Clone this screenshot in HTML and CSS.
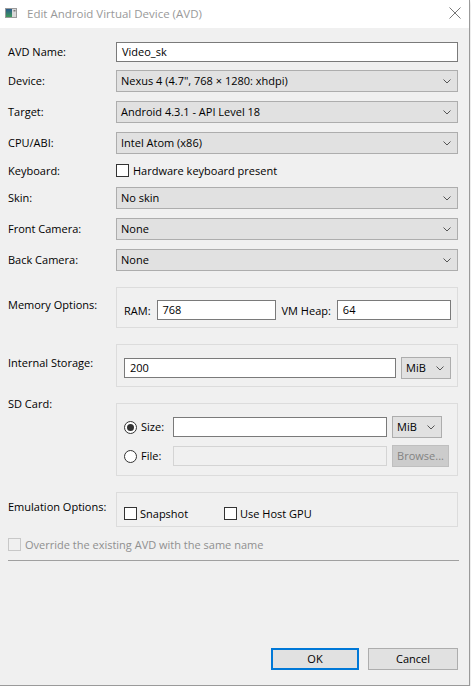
FILE: index.html
```html
<!DOCTYPE html>
<html>
<head>
<meta charset="utf-8">
<link rel="stylesheet" href="styles.css">
</head>
<body>
<div class="window">
  <div class="titlebar">
    <svg class="appicon" width="12" height="10" viewBox="0 0 12 10">
      <defs>
        <linearGradient id="g" x1="0" y1="0" x2="0" y2="1">
          <stop offset="0" stop-color="#2a5a8c"/>
          <stop offset="1" stop-color="#3f9a5a"/>
        </linearGradient>
      </defs>
      <rect x="0.5" y="0.5" width="11" height="9" fill="#d8d8d8" stroke="#9a9a9a"/>
      <rect x="1" y="1" width="6" height="8" fill="url(#g)"/>
      <rect x="8.5" y="2" width="2" height="1.5" fill="#7a7a7a"/>
    </svg>
    <span class="title">Edit Android Virtual Device (AVD)</span>
    <svg class="close" width="12" height="12" viewBox="0 0 12 12">
      <path d="M0.5 0.5 L11.5 11.5 M11.5 0.5 L0.5 11.5" stroke="#777" stroke-width="1" fill="none"/>
    </svg>
  </div>

  <div class="content">
    <div class="row r-name">
      <div class="lbl">AVD Name:</div>
      <div class="input wide">Video_sk</div>
    </div>
    <div class="row r-first">
      <div class="lbl">Device:</div>
      <div class="combo wide"><span>Nexus 4 (4.7", 768 × 1280: xhdpi)</span><svg class="chev" width="8" height="5" viewBox="0 0 8 5"><polyline points="0.5,0.5 4,4 7.5,0.5" fill="none" stroke="#555"/></svg></div>
    </div>
    <div class="row r-combo">
      <div class="lbl">Target:</div>
      <div class="combo wide"><span>Android 4.3.1 - API Level 18</span><svg class="chev" width="8" height="5" viewBox="0 0 8 5"><polyline points="0.5,0.5 4,4 7.5,0.5" fill="none" stroke="#555"/></svg></div>
    </div>
    <div class="row r-combo">
      <div class="lbl">CPU/ABI:</div>
      <div class="combo wide"><span>Intel Atom (x86)</span><svg class="chev" width="8" height="5" viewBox="0 0 8 5"><polyline points="0.5,0.5 4,4 7.5,0.5" fill="none" stroke="#555"/></svg></div>
    </div>
    <div class="row r-check">
      <div class="lbl">Keyboard:</div>
      <div class="checkitem"><span class="check"></span><span>Hardware keyboard present</span></div>
    </div>
    <div class="row r-after-check">
      <div class="lbl">Skin:</div>
      <div class="combo wide"><span>No skin</span><svg class="chev" width="8" height="5" viewBox="0 0 8 5"><polyline points="0.5,0.5 4,4 7.5,0.5" fill="none" stroke="#555"/></svg></div>
    </div>
    <div class="row r-combo">
      <div class="lbl">Front Camera:</div>
      <div class="combo wide"><span>None</span><svg class="chev" width="8" height="5" viewBox="0 0 8 5"><polyline points="0.5,0.5 4,4 7.5,0.5" fill="none" stroke="#555"/></svg></div>
    </div>
    <div class="row r-combo">
      <div class="lbl">Back Camera:</div>
      <div class="combo wide"><span>None</span><svg class="chev" width="8" height="5" viewBox="0 0 8 5"><polyline points="0.5,0.5 4,4 7.5,0.5" fill="none" stroke="#555"/></svg></div>
    </div>

    <div class="grow g-mem">
      <div class="glbl">Memory Options:</div>
      <div class="group mem">
        <span>RAM:</span>
        <div class="input">768</div>
        <span>VM Heap:</span>
        <div class="input">64</div>
      </div>
    </div>

    <div class="grow g-int">
      <div class="glbl">Internal Storage:</div>
      <div class="group int">
        <div class="input">200</div>
        <div class="combo"><span>MiB</span><svg class="chev" width="8" height="5" viewBox="0 0 8 5"><polyline points="0.5,0.5 4,4 7.5,0.5" fill="none" stroke="#555"/></svg></div>
      </div>
    </div>

    <div class="grow g-sd">
      <div class="glbl">SD Card:</div>
      <div class="group sd">
        <div class="radioitem"><span class="radio on"></span><span>Size:</span></div>
        <div class="input"></div>
        <div class="combo"><span>MiB</span><svg class="chev" width="8" height="5" viewBox="0 0 8 5"><polyline points="0.5,0.5 4,4 7.5,0.5" fill="none" stroke="#555"/></svg></div>
        <div class="radioitem"><span class="radio"></span><span>File:</span></div>
        <div class="input disabled"></div>
        <div class="btn disabled">Browse...</div>
      </div>
    </div>

    <div class="grow g-emu">
      <div class="glbl">Emulation Options:</div>
      <div class="group emu">
        <div class="checkitem first"><span class="check"></span><span>Snapshot</span></div>
        <div class="checkitem"><span class="check"></span><span>Use Host GPU</span></div>
      </div>
    </div>

    <div class="override checkitem disabled"><span class="check"></span><span>Override the existing AVD with the same name</span></div>
    <div class="separator"></div>
  </div>

  <div class="footer">
    <div class="btn ok">OK</div>
    <div class="btn cancel">Cancel</div>
  </div>
</div>
</body>
</html>
```

FILE: styles.css
```css
html, body {
  margin: 0;
  padding: 0;
  background: #ffffff;
}

body {
  font-family: "Open Sans", "Noto Sans", sans-serif;
  font-size: 11px;
  color: #000;
}

.window {
  width: 469px;
  height: 685px;
  background: #f0f0f0;
  border-right: 1px solid #9a9a9a;
  border-bottom: 1px solid #9a9a9a;
  box-shadow: 0 2px 4px rgba(0, 0, 0, 0.18);
  display: flex;
  flex-direction: column;
}

.titlebar {
  height: 28px;
  background: #ffffff;
  display: flex;
  align-items: center;
  padding: 0 8px 0 5px;
}

.appicon {
  margin-top: -2px;
}

.title {
  margin-left: 10px;
  color: #999999;
  font-size: 11.5px;
  flex: 1;
  margin-top: -1px;
}

.close {
  margin-top: -2px;
}

.content {
  padding: 0 11px 0 8px;
  display: flex;
  flex-direction: column;
}

.row {
  display: flex;
  align-items: center;
}

.lbl, .glbl {
  width: 108px;
  flex: none;
  line-height: 16px;
}

.r-name { margin-top: 14px; height: 20px; }
.r-first { margin-top: 8px; height: 22px; }
.r-combo { margin-top: 9px; height: 22px; }
.r-check { margin-top: 10px; height: 13px; }
.r-after-check { margin-top: 10px; height: 22px; }

.wide {
  flex: 1;
}

.input {
  box-sizing: border-box;
  height: 20px;
  border: 1px solid #7a7a7a;
  background: #ffffff;
  padding: 0 5px;
  display: flex;
  align-items: center;
  line-height: 16px;
}

.input.disabled {
  border-color: #d4d4d4;
  background: #f0f0f0;
}

.combo {
  box-sizing: border-box;
  height: 22px;
  border: 1px solid #adadad;
  background: #e1e1e1;
  padding: 0 6px 0 4px;
  display: flex;
  align-items: center;
  justify-content: space-between;
  line-height: 16px;
}

.chev {
  flex: none;
}

.checkitem {
  display: flex;
  align-items: center;
  gap: 4px;
  line-height: 16px;
}

.check {
  box-sizing: border-box;
  width: 13px;
  height: 13px;
  border: 1px solid #333333;
  background: #ffffff;
  flex: none;
}

.radioitem {
  display: flex;
  align-items: center;
  gap: 4px;
  line-height: 16px;
}

.radio {
  box-sizing: border-box;
  width: 13px;
  height: 13px;
  border: 1px solid #333333;
  border-radius: 50%;
  background: #ffffff;
  flex: none;
  display: flex;
  align-items: center;
  justify-content: center;
}

.radio.on::after {
  content: "";
  width: 7px;
  height: 7px;
  border-radius: 50%;
  background: #333333;
}

.grow {
  display: flex;
  align-items: flex-start;
  margin-top: 16px;
}

.group {
  box-sizing: border-box;
  width: 342px;
  border: 1px solid #dcdcdc;
}

.g-mem .glbl { padding-top: 10px; }
.g-int .glbl { padding-top: 11px; }
.g-sd .glbl { margin-top: -7px; }
.g-emu .glbl { padding-top: 7px; }

.mem {
  height: 41px;
  padding: 12px 6px 0 7px;
  display: grid;
  grid-template-columns: auto 119px auto 1fr;
  column-gap: 6px;
  align-items: center;
  align-content: start;
}

.int {
  height: 43px;
  padding: 12px 6px 0 7px;
  display: grid;
  grid-template-columns: 1fr 50px;
  column-gap: 5px;
  align-items: center;
  align-content: start;
}

.sd {
  height: 73px;
  padding: 12px 0 0 7px;
  display: grid;
  grid-template-columns: 44px 214px auto;
  grid-template-rows: 22px 22px;
  column-gap: 5px;
  row-gap: 7px;
  align-items: center;
  align-content: start;
}

.sd .combo {
  width: 50px;
}

.sd .btn.disabled {
  width: 57px;
  height: 22px;
}

.emu {
  width: 343px;
  height: 35px;
  padding: 14px 0 0 7px;
  display: flex;
  align-items: flex-start;
}

.emu .checkitem {
  height: 13px;
  gap: 3px;
}

.emu .checkitem.first {
  width: 100px;
}

.override {
  margin-top: 11px;
  height: 13px;
}

.override.disabled {
  color: #8f8f8f;
}

.override .check {
  border-color: #c8c8c8;
  background: #f0f0f0;
}

.separator {
  margin-top: 9px;
  height: 1px;
  width: 451px;
  background: #a0a0a0;
}

.footer {
  margin-top: auto;
  display: flex;
  justify-content: flex-end;
  gap: 9px;
  padding: 0 11px 15px 0;
}

.btn {
  box-sizing: border-box;
  height: 22px;
  background: #e1e1e1;
  border: 1px solid #adadad;
  display: flex;
  align-items: center;
  justify-content: center;
  line-height: 16px;
}

.btn.ok {
  width: 88px;
  border: 2px solid #0078d7;
}

.btn.cancel {
  width: 90px;
}

.btn.disabled {
  background: #cccccc;
  border-color: #bfbfbf;
  color: #838383;
}
```
